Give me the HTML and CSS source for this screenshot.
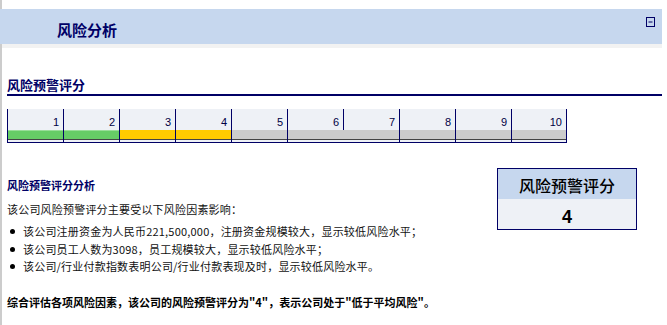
FILE: index.html
```html
<!DOCTYPE html>
<html lang="zh-CN">
<head>
    <meta charset="UTF-8" />
    <meta name="viewport" content="width=device-width, initial-scale=1.0" />
    <title>风险分析</title>
    <link rel="stylesheet" href="styles.css">
</head>
<body>
    <div class="page">
        <div class="band">
            <h1>风险分析</h1>
            <svg class="toggle" width="9" height="10" viewBox="0 0 9 10">
                <rect x="0.5" y="0.5" width="8" height="9" fill="none" stroke="#000066" />
                <line x1="2.5" y1="5" x2="6.5" y2="5" stroke="#000066" />
            </svg>
        </div>
        <div class="band-shadow"></div>

        <div class="content">
            <h2 class="section-title">风险预警评分</h2>

            <div class="scale">
                <div class="cell"><div class="num">1</div><div class="lower"><div class="bar green"></div></div></div>
                <div class="cell"><div class="num">2</div><div class="lower"><div class="bar green"></div></div></div>
                <div class="cell"><div class="num">3</div><div class="lower"><div class="bar yellow"></div></div></div>
                <div class="cell"><div class="num">4</div><div class="lower"><div class="bar yellow"></div></div></div>
                <div class="cell"><div class="num">5</div><div class="lower"><div class="bar grey"></div></div></div>
                <div class="cell"><div class="num">6</div><div class="lower"><div class="bar grey"></div></div></div>
                <div class="cell"><div class="num">7</div><div class="lower joined"><div class="bar grey"></div></div></div>
                <div class="cell"><div class="num">8</div><div class="lower"><div class="bar grey"></div></div></div>
                <div class="cell"><div class="num">9</div><div class="lower"><div class="bar grey"></div></div></div>
                <div class="cell last"><div class="num">10</div><div class="lower"><div class="bar grey"></div></div></div>
            </div>

            <div class="analysis">
                <div class="analysis-text">
                    <h3>风险预警评分分析</h3>
                    <p class="intro">该公司风险预警评分主要受以下风险因素影响：</p>
                    <ul class="factors">
                        <li>该公司注册资金为人民币221,500,000，注册资金规模较大，显示较低风险水平；</li>
                        <li>该公司员工人数为3098，员工规模较大，显示较低风险水平；</li>
                        <li>该公司/行业付款指数表明公司/行业付款表现及时，显示较低风险水平。</li>
                    </ul>
                </div>
                <div class="score-box">
                    <div class="score-head">风险预警评分</div>
                    <div class="score-value">4</div>
                </div>
            </div>

            <p class="summary">综合评估各项风险因素，该公司的风险预警评分为"4"，表示公司处于"低于平均风险"。</p>
        </div>
    </div>
</body>
</html>
```

FILE: styles.css
```css
body {
    margin: 0;
    font-family: "Noto Sans CJK SC", "Liberation Sans", sans-serif;
    font-size: 11px;
    color: #111;
    background-color: white;
    text-spacing-trim: space-all;
    font-feature-settings: "chws" 0, "halt" 0;
}

.page {
    border-left: 2px solid #cccccc;
    min-height: 100vh;
    box-sizing: border-box;
    padding-top: 9px;
    margin-right: 5px;
}

.band {
    margin-left: -2px;
    height: 35px;
    background-color: #c6d7ee;
    display: flex;
    justify-content: space-between;
    align-items: flex-start;
}

.band h1 {
    margin: 13px 0 0 57px;
    font-size: 15px;
    line-height: 15px;
    font-weight: bold;
    color: #000066;
}

.toggle {
    margin: 8px 7px 0 0;
}

.band-shadow {
    height: 4px;
    background-color: #f2f2f2;
}

.content {
    padding-left: 5px;
}

.section-title {
    margin: 29px 0 0 0;
    padding-bottom: 1px;
    font-size: 13px;
    line-height: 16px;
    font-weight: bold;
    color: #000066;
    border-bottom: 2px solid #000066;
}

.scale {
    margin-top: 13px;
    display: grid;
    grid-template-columns: repeat(10, 56px);
}

.cell {
    display: flex;
    flex-direction: column;
    background-color: #eef1f6;
    border-bottom: 1px solid #000066;
}

.cell.last {
    border-right: 1px solid #000066;
}

.num {
    border-left: 1px solid #000066;
    height: 21px;
    box-sizing: border-box;
    padding: 6px 4px 0 0;
    line-height: 15px;
    text-align: right;
    font-family: "Liberation Sans", sans-serif;
    color: #000044;
}

.lower {
    border-left: 1px solid #000066;
    padding-bottom: 2px;
}

.lower.joined {
    border-left: none;
}

.bar {
    height: 9px;
    border-bottom: 1px solid #444444;
}

.green {
    background-color: #66cc66;
    box-shadow: inset 0 1px 0 #99dd99;
}

.yellow {
    background-color: #ffcc00;
}

.grey {
    background-color: #cccccc;
}

.analysis {
    display: flex;
    align-items: flex-start;
}

.analysis-text {
    width: 490px;
    flex: none;
}

.analysis h3 {
    margin: 35px 0 0 0;
    font-size: 11px;
    line-height: 15px;
    font-weight: bold;
    color: #000066;
}

.intro {
    margin: 9px 0 0 0;
    line-height: 15px;
    letter-spacing: 0.2px;
}

.factors {
    list-style: none;
    margin: 6px 0 0 0;
    padding: 0;
    letter-spacing: 0.2px;
}

.factors li {
    display: flex;
    align-items: center;
    padding-left: 3px;
    line-height: 17.5px;
}

.factors li::before {
    content: "";
    width: 5px;
    height: 5px;
    border-radius: 50%;
    background-color: #000;
    margin-right: 8px;
    flex: none;
}

.score-box {
    margin-top: 25px;
    width: 138px;
    border: 1px solid #000066;
    text-align: center;
}

.score-head {
    height: 30px;
    box-sizing: border-box;
    padding-top: 3px;
    line-height: 26px;
    font-size: 16px;
    font-weight: 500;
    color: #000;
    background-color: #c6d7ee;
}

.score-value {
    height: 30px;
    box-sizing: border-box;
    padding-top: 7px;
    line-height: 23px;
    font-size: 18px;
    font-weight: bold;
    font-family: "Liberation Sans", sans-serif;
    color: #000;
    background-color: #eef1f6;
}

.summary {
    margin: 19px 0 0 0;
    line-height: 15px;
    font-weight: bold;
    color: #000;
}
```
